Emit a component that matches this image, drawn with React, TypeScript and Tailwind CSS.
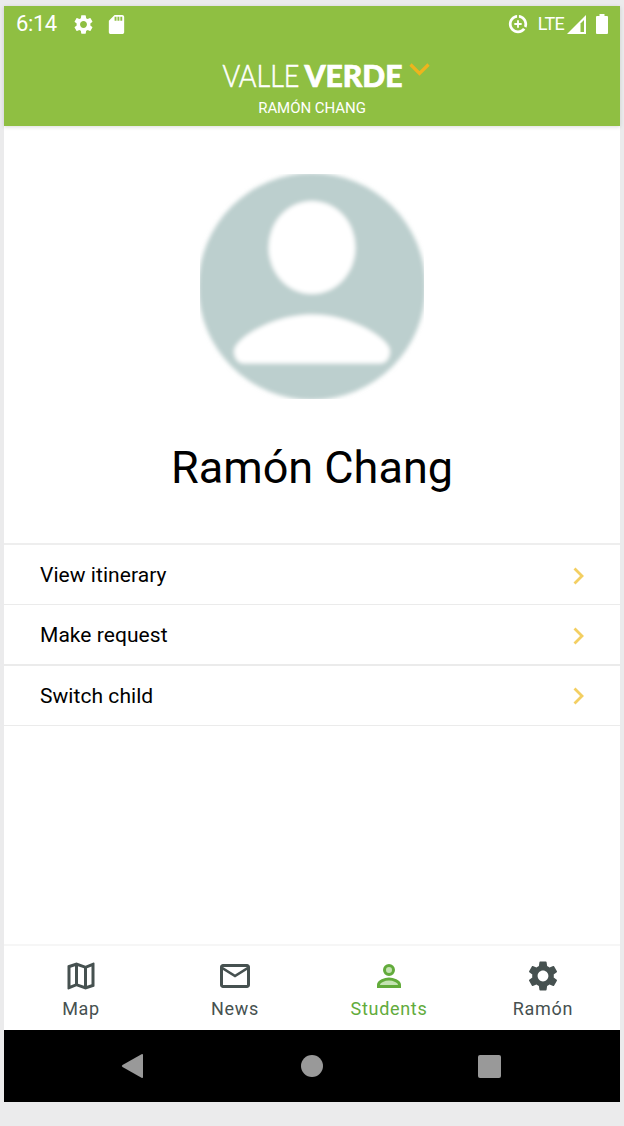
import type { ReactNode } from 'react'
import { MdOutlineMap, MdOutlineMail, MdSettings, MdSdCard } from 'react-icons/md'

type Tab = {
  label: string
  icon: ReactNode
  isActive?: boolean
}

const actions = ['View itinerary', 'Make request', 'Switch child']

const tabs: Tab[] = [
  { label: 'Map', icon: <MdOutlineMap className="size-9" /> },
  { label: 'News', icon: <MdOutlineMail className="size-9" /> },
  { label: 'Students', icon: <StudentIcon />, isActive: true },
  { label: 'Ramón', icon: <MdSettings className="size-9" /> },
]

function StudentIcon() {
  return (
    <svg viewBox="0 0 24 24" className="size-9">
      <circle cx="12" cy="8" r="3" fill="#c4e3b2" stroke="currentColor" strokeWidth="2" />
      <path
        d="M5 19v-1.2C5 15.6 9.3 14 12 14s7 1.6 7 3.8V19z"
        fill="#c4e3b2"
        stroke="currentColor"
        strokeWidth="2"
      />
    </svg>
  )
}

function DataSaverIcon() {
  return (
    <svg viewBox="0 0 24 24" className="size-[22px]" fill="currentColor">
      <path d="M13 2.05v3.03c3.39.49 6 3.39 6 6.92 0 .9-.18 1.75-.48 2.54l2.6 1.53c.56-1.24.88-2.62.88-4.07 0-5.18-3.95-9.45-9-9.95zM12 19c-3.87 0-7-3.13-7-7 0-3.53 2.61-6.43 6-6.92V2.05c-5.06.5-9 4.76-9 9.95 0 5.52 4.47 10 9.99 10 3.31 0 6.24-1.61 8.06-4.09l-2.6-1.53C16.17 17.98 14.21 19 12 19z" />
      <path d="M11 8h2v3h3v2h-3v3h-2v-3H8v-2h3z" />
    </svg>
  )
}

function StatusBar() {
  return (
    <div className="flex h-9 items-center px-3">
      <span className="w-14 text-[22px] leading-9 tracking-[-0.4px]">6:14</span>
      <MdSettings className="size-[23px]" />
      <MdSdCard className="ml-[10px] size-[23px]" />
      <div className="ml-auto flex items-center">
        <DataSaverIcon />
        <span className="ml-[9px] text-[18px] leading-[22px] tracking-[-0.7px]">LTE</span>
        <svg viewBox="0 0 19 19" className="ml-[3px] size-[19px]">
          <path d="M0 19 19 0v19z" fill="currentColor" />
          <path d="M13.5 8.5 17 5v12h-3.5z" fill="#8fbf42" />
        </svg>
        <svg viewBox="0 0 12 20" className="ml-[10px] h-5 w-3" fill="currentColor">
          <path d="M3.5 0h5v2H11a1 1 0 0 1 1 1v16a1 1 0 0 1-1 1H1a1 1 0 0 1-1-1V3a1 1 0 0 1 1-1h2.5z" />
        </svg>
      </div>
    </div>
  )
}

function Logo() {
  return (
    <svg viewBox="0 0 186 44" className="h-[44px] w-[186px]" fill="currentColor" stroke="currentColor">
      <text
        x="2.5"
        y="34"
        textLength="77"
        lengthAdjust="spacingAndGlyphs"
        strokeWidth="0.6"
        className="font-['Lato',sans-serif] text-[31px] font-light"
      >
        VALLE
      </text>
      <text
        x="84.5"
        y="34"
        textLength="98"
        lengthAdjust="spacingAndGlyphs"
        strokeWidth="0.7"
        className="font-['Lato',sans-serif] text-[31px] font-black"
      >
        VERDE
      </text>
    </svg>
  )
}

function Header() {
  return (
    <header className="z-10 h-[120px] shrink-0 bg-[#8fbf42] text-white shadow-[0_1px_4px_rgba(0,0,0,0.14)]">
      <StatusBar />
      <div className="flex flex-col items-center pt-[11px]">
        <div className="flex pl-[26px]">
          <Logo />
          <svg viewBox="0 0 21 14" className="mt-[10px] ml-[3px] h-[14px] w-[21px]" fill="none">
            <path d="m1.5 1.5 9 9 9-9" stroke="#eeb41d" strokeWidth="3.2" />
          </svg>
        </div>
        <p className="text-[15px] leading-[22px] tracking-[-0.05px]">RAMÓN CHANG</p>
      </div>
    </header>
  )
}

function Avatar() {
  return (
    <svg viewBox="0 0 224 225" className="mt-12 h-[225px] w-56 shrink-0">
      <defs>
        <filter id="soft" x="-10%" y="-10%" width="120%" height="120%">
          <feGaussianBlur stdDeviation="2" />
        </filter>
      </defs>
      <g filter="url(#soft)">
        <circle cx="112" cy="112.5" r="113.5" fill="#bccfce" />
        <ellipse cx="112" cy="73.5" rx="43.5" ry="46.5" fill="#fff" />
        <path
          d="M44 189.5C38 189.5 34 184 34 177C34 165 72 140.5 112 140.5S190 165 190 177C190 184 186 189.5 180 189.5Z"
          fill="#fff"
        />
      </g>
    </svg>
  )
}

function ActionList() {
  return (
    <ul className="mt-[45px] w-full border-t-2 border-[#eeeeee]">
      {actions.map((action) => (
        <li
          key={action}
          className="flex h-[60.4px] items-center justify-between border-[#ebebeb] pt-[3px] pr-[35px] pl-9 odd:border-b even:border-b-2"
        >
          <span className="text-[21px] tracking-[0.05px] text-black">{action}</span>
          <svg viewBox="0 0 12 18" className="mb-px h-[18px] w-3" fill="none">
            <path d="m1.5 1.5 7.5 7.5-7.5 7.5" stroke="#f3cf62" strokeWidth="2.8" />
          </svg>
        </li>
      ))}
    </ul>
  )
}

function TabBar() {
  return (
    <nav className="grid h-[86px] shrink-0 grid-cols-4 border-t-2 border-[#f6f6f6]">
      {tabs.map((tab) => (
        <div
          key={tab.label}
          className={`flex flex-col items-center pt-3 ${tab.isActive ? 'text-[#62ab3b]' : 'text-[#465150]'}`}
        >
          {tab.icon}
          <span className="mt-[3px] text-[18px] leading-6 tracking-[0.7px]">{tab.label}</span>
        </div>
      ))}
    </nav>
  )
}

function SystemNavigation() {
  return (
    <div className="flex h-[72px] shrink-0 items-center justify-between bg-black pr-[119px] pl-[117px] text-[#999]">
      <svg viewBox="0 0 23 26" className="h-[26px] w-[23px]" fill="currentColor">
        <path d="M20.5 1.2Q22 .5 22 2v22q0 1.5-1.5.8L1.5 14q-1.5-1 0-2z" />
      </svg>
      <div className="ml-0.5 size-[22px] rounded-full bg-[#999]" />
      <div className="size-[23px] rounded-[2px] bg-[#999]" />
    </div>
  )
}

export default function App() {
  return (
    <div className="h-[1126px] w-[624px] bg-[#ebebec] px-1 pt-1.5 font-['Roboto',sans-serif]">
      <div className="flex h-[1096px] flex-col bg-white">
        <Header />
        <main className="flex flex-1 flex-col items-center">
          <Avatar />
          <h1 className="mt-[39px] text-[45px] leading-[60px] text-black">Ramón Chang</h1>
          <ActionList />
        </main>
        <TabBar />
        <SystemNavigation />
      </div>
    </div>
  )
}
